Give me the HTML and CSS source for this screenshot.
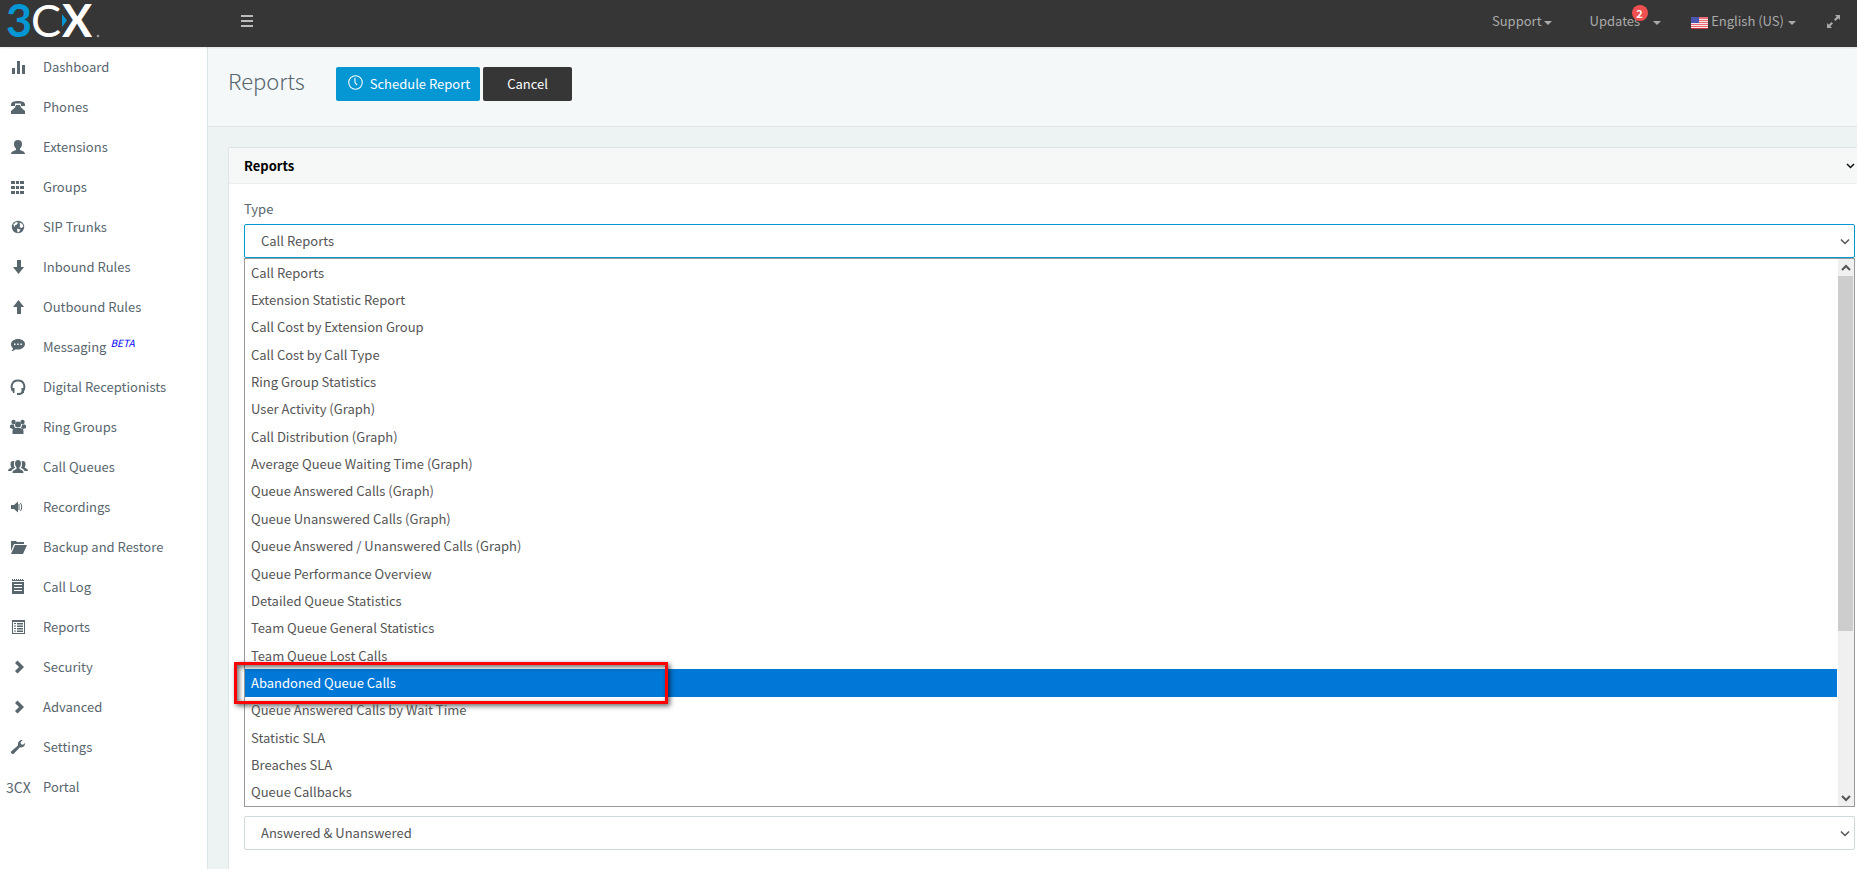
FILE: index.html
```html
<!DOCTYPE html>
<html lang="en">
<head>
<meta charset="utf-8">
<title>3CX Management Console - Reports</title>
<link rel="stylesheet" href="styles.css">
</head>
<body>
<header class="topbar">
  <a class="brand" href="#" aria-label="3CX">
    <svg class="logo" width="104" height="44" viewBox="0 0 104 44">
      <text class="logo-three" x="6" y="37">3</text>
      <text class="logo-letter" x="31" y="37">C</text>
      <text class="logo-letter logo-x" x="62" y="37">X</text>
      <path class="logo-tip" d="M62 14v13l5-6.500z"/>
      <circle class="logo-dot" cx="98" cy="36" r="1.300"/>
    </svg>
  </a>
  <button class="menu-toggle" aria-label="Toggle menu">
    <svg width="12" height="12" viewBox="0 0 12 12"><path fill="currentColor" d="M0 0h12v2H0zM0 5h12v2H0zM0 10h12v2H0z"/></svg>
  </button>
  <nav class="top-links">
    <button class="top-link">Support<span class="caret"></span></button>
    <button class="top-link updates">Updates<span class="badge">2</span><span class="caret"></span></button>
    <button class="top-link language">
      <svg class="flag" width="17" height="12" viewBox="0 0 17 12"><path fill="#f9e4e6" d="M0 0h17v12H0z"/><path fill="#ee6a74" d="M0 0h17v2H0zM0 3h17v1H0zM0 5h17v1H0zM0 7h17v1H0zM0 9h17v1H0z"/><path fill="#c8323c" d="M0 11h17v1H0z"/><path fill="#4c56b0" d="M0 0h8v6H0z"/></svg>
      English (US)<span class="caret"></span></button>
    <button class="top-link expand" aria-label="Full screen">
      <svg width="13" height="13" viewBox="0 0 13 13"><path fill="currentColor" d="M8 0h5v5l-1.700-1.700L8.500 6 7 4.500l2.700-2.800zM0 8l1.700 1.700L4.500 7 6 8.500l-2.700 2.800L5 13H0z"/></svg>
    </button>
  </nav>
</header>
<div class="layout">
  <nav class="sidebar">
    <a href="#"><svg class="icon" viewBox="0 0 16 16"><path d="M2 9h3v6H2zM7 2h3v13H7zM12 6h3v9h-3z"/></svg>Dashboard</a>
    <a href="#"><svg class="icon" viewBox="0 0 16 16"><path d="M1 5.500C1 3 4 2 8 2s7 1 7 3.500V7h-4V4.600H5V7H1zM6 6h4l1 2.500 4 3.500v3H1v-3l4-3.500z"/></svg>Phones</a>
    <a href="#"><svg class="icon" viewBox="0 0 16 16"><path d="M8 1c2.600 0 4 1.600 4 4 0 2-.8 3.600-2 4.600V11c1.500.8 5 1.400 5 4H1c0-2.600 3.500-3.200 5-4V9.600C4.800 8.600 4 7 4 5c0-2.400 1.400-4 4-4z"/></svg>Extensions</a>
    <a href="#"><svg class="icon" viewBox="0 0 16 16"><path d="M1 2h4v3H1zM6 2h3v3H6zM10 2h4v3h-4zM1 7h4v3H1zM6 7h3v3H6zM10 7h4v3h-4zM1 12h4v3H1zM6 12h3v3H6zM10 12h4v3h-4z"/></svg>Groups</a>
    <a href="#"><svg class="icon" viewBox="0 0 16 16"><circle cx="8" cy="8" r="6.200"/><path class="cut" d="M3.300 5.500 6 3l2 .5L7 5.500l-2 .8-.3 2.200zM9.500 3.500l3 1.500 1 2.500-2 1.500-2-1 .5-1.500zM7 9.500l3.500 1L9 13l-1.500.5z"/></svg>SIP Trunks</a>
    <a href="#"><svg class="icon" viewBox="0 0 16 16"><path d="M7 1h4v7h3l-5.500 7L3 8h4z"/></svg>Inbound Rules</a>
    <a href="#"><svg class="icon" viewBox="0 0 16 16"><path d="M7 15h4V8h3L8.500 1 3 8h4z"/></svg>Outbound Rules</a>
    <a href="#"><svg class="icon" viewBox="0 0 16 16"><path d="M8 0c4 0 7 2.200 7 5s-3 5.500-7 5.500c-.8 0-1.600 0-2.300-.3C4.500 11.300 3 12 1.500 12c1-.8 1.500-1.800 1.500-2.700C1.700 8.200 1 7 1 5.200 1 2.300 4 0 8 0z"/><path class="cut" d="M4 4.500h1.500v1.500H4zM7.200 4.500h1.500v1.500H7.200zM10.400 4.500h1.500v1.500h-1.500z"/></svg>Messaging <em class="beta">BETA</em></a>
    <a href="#"><svg class="icon" viewBox="0 0 16 16"><path class="line" d="M2.800 12C.5 8 1.500 1.500 8 1.500S15.500 8 13.200 12c-.6 2-1.700 3-4.200 3"/><path d="M2 9h2.500v5H3zM11.500 9H14v5h-2.500zM7 14h3v2H7z"/></svg>Digital Receptionists</a>
    <a href="#"><svg class="icon" viewBox="0 0 16 16"><circle cx="3.500" cy="3" r="2.200"/><circle cx="12.500" cy="3" r="2.200"/><circle cx="8" cy="5.500" r="3"/><path d="M0 9V7c0-1 1-1.500 2-1.500h2C4 7.500 4.600 8.500 5.500 9.200L3 10zM16 9V7c0-1-1-1.500-2-1.500h-2c0 2-.6 3-1.500 3.700L13 10zM2.500 15v-3c0-2 1-3 2.500-3h6c1.500 0 2.500 1 2.500 3v3z"/></svg>Ring Groups</a>
    <a href="#"><svg class="icon wide" viewBox="0 0 20 16"><path d="M10 1c2 0 3 1.300 3 3.200 0 1.800-.6 3-1.500 4V10c1.500.8 4 1.200 4 4h-11c0-2.800 2.500-3.200 4-4V8.200C7.600 7.200 7 6 7 4.200 7 2.300 8 1 10 1zM5 2c.6 0 1 .1 1.300.4C5.500 5 6 7.500 7 8.600 6.500 10 4 10 3.200 12H0c0-2 1.500-2.500 3.500-3.500C2.600 7 2.500 6 2.500 5 2.500 3 3.400 2 5 2zM15 2c-.6 0-1 .1-1.300.4C14.500 5 14 7.500 13 8.600c.5 1.400 3 1.400 3.800 3.400H20c0-2-1.500-2.500-3.500-3.500.9-1.500 1-2.500 1-3.500 0-2-.9-3-2.500-3z"/></svg>Call Queues</a>
    <a href="#"><svg class="icon" viewBox="0 0 16 16"><path d="M1 6h3l4-3.500v11L4 10H1z"/><path class="thin" d="M9 5v6M10.500 4c1.600 2 1.600 6 0 8"/></svg>Recordings</a>
    <a href="#"><svg class="icon wide" viewBox="0 0 20 16"><path d="M3 2h5l1 1h7v2H6L3 12zM7 6h12l-4 9H3z"/></svg>Backup and Restore</a>
    <a href="#"><svg class="icon" viewBox="0 0 16 16"><path d="M2 0h1v1h1V0h1v1h1V0h1v1h1V0h1v1h1V0h1v1h1V0h1v1h1v1H2zM2 3h12v12H2z"/><path class="cut" d="M4 5h8v1H4zM4 8h8v1H4zM4 11h8v1H4z"/></svg>Call Log</a>
    <a href="#"><svg class="icon" viewBox="0 0 16 16"><path d="M2 1h13v14H2z"/><path class="cut" d="M3 3h11v11H3z"/><path d="M4 4h2v1H4zM7 4h6v1.500H7zM4 6.500h2v1H4zM7 6.500h6V8H7zM4 9h2v1H4zM7 9h6v1.500H7zM4 11.500h2v1H4zM7 11.500h6V13H7z"/></svg>Reports</a>
    <a href="#"><svg class="icon" viewBox="0 0 16 16"><path d="M5 4l2.500-2.500L14 8l-6.500 6.500L5 12l4-4z"/></svg>Security</a>
    <a href="#"><svg class="icon" viewBox="0 0 16 16"><path d="M5 4l2.500-2.500L14 8l-6.500 6.500L5 12l4-4z"/></svg>Advanced</a>
    <a href="#"><svg class="icon" viewBox="0 0 16 16"><path d="M12.500 1 10.500 3.500l.5 1.800 2 .4L15 4c.3 3-2 5-5 4.300L3.500 15C2 15.500.5 14 1 12.600L8 6.500C7.500 3 9.500 1 12.500 1z"/></svg>Settings</a>
    <a href="#"><span class="mini-logo">3CX</span>Portal</a>
  </nav>
  <main class="content">
    <div class="page-head">
      <h1>Reports</h1>
      <div class="actions">
        <button class="btn primary"><svg class="clock" width="15" height="15" viewBox="0 0 14 14"><circle cx="7" cy="7" r="6.300"/><path d="M6.500 2.500V7l2 2.500"/></svg>Schedule Report</button>
        <button class="btn dark">Cancel</button>
      </div>
    </div>
    <section class="panel">
      <div class="panel-head">
        <h2>Reports</h2>
        <svg width="9" height="6" viewBox="0 0 9 6"><path d="M1 1l3.500 3.500L8 1" fill="none" stroke="#111" stroke-width="1.500"/></svg>
      </div>
      <div class="panel-body">
        <label for="type">Type</label>
        <div class="select-box">
          <select id="type" class="active"><option>Call Reports</option></select>
          <svg class="chevron" width="10" height="8" viewBox="0 0 10 8"><path d="M1 1.500l4 4 4-4"/></svg>
        </div>
        <div class="popup">
          <ul class="options" role="listbox" aria-label="Type">
            <li role="option">Call Reports</li>
            <li role="option">Extension Statistic Report</li>
            <li role="option">Call Cost by Extension Group</li>
            <li role="option">Call Cost by Call Type</li>
            <li role="option">Ring Group Statistics</li>
            <li role="option">User Activity (Graph)</li>
            <li role="option">Call Distribution (Graph)</li>
            <li role="option">Average Queue Waiting Time (Graph)</li>
            <li role="option">Queue Answered Calls (Graph)</li>
            <li role="option">Queue Unanswered Calls (Graph)</li>
            <li role="option">Queue Answered / Unanswered Calls (Graph)</li>
            <li role="option">Queue Performance Overview</li>
            <li role="option">Detailed Queue Statistics</li>
            <li role="option">Team Queue General Statistics</li>
            <li role="option">Team Queue Lost Calls</li>
            <li role="option" class="current" aria-selected="true">Abandoned Queue Calls<span class="marker"></span></li>
            <li role="option">Queue Answered Calls by Wait Time</li>
            <li role="option">Statistic SLA</li>
            <li role="option">Breaches SLA</li>
            <li role="option">Queue Callbacks</li>
          </ul>
          <div class="scrollbar">
            <svg width="10" height="8" viewBox="0 0 10 8"><path d="M1 6l4-4 4 4"/></svg>
            <div class="track"><div class="thumb"></div></div>
            <svg width="10" height="8" viewBox="0 0 10 8"><path d="M1 2l4 4 4-4"/></svg>
          </div>
        </div>
        <div class="select-box">
          <select aria-label="Answered"><option>Answered &amp; Unanswered</option></select>
          <svg class="chevron" width="10" height="8" viewBox="0 0 10 8"><path d="M1 1.500l4 4 4-4"/></svg>
        </div>
      </div>
    </section>
  </main>
</div>
</body>
</html>
```
FILE: styles.css
```css
* { box-sizing: border-box; }

body {
  margin: 0;
  min-height: 100vh;
  display: flex;
  flex-direction: column;
  overflow: hidden;
  background: #edf2f3;
  color: #58666e;
  font: 13px/20px "Source Sans Pro", "Noto Sans CJK SC", "Noto Sans", sans-serif;
}

button, select { font: inherit; }
h1, h2 { margin: 0; }

/* top bar */
.topbar {
  display: flex;
  align-items: center;
  height: 47px;
  padding-bottom: 5px;
  background: #363636;
  color: #aaa;
  box-shadow: 0 1px 2px rgba(0, 0, 0, .1);
  z-index: 1;
}
.brand { width: 237px; height: 42px; }
.logo { display: block; }
.logo-three { font: bold 45px Lato, sans-serif; fill: #0596d4; }
.logo-letter { font: 45px Lato, sans-serif; fill: #fff; }
.logo-x { font-weight: bold; }
.logo-tip { fill: #0596d4; }
.logo-dot { fill: #999; }
.menu-toggle, .top-link {
  padding: 0;
  border: 0;
  background: none;
  color: inherit;
  display: flex;
  align-items: center;
}
.menu-toggle { width: 20px; height: 20px; justify-content: center; color: #bbb; }
.top-links { display: flex; margin-left: auto; padding-right: 17px; }
.top-link { position: relative; height: 42px; margin-left: 38px; }
.caret {
  border: 4px solid transparent;
  border-top-color: currentColor;
  border-bottom: 0;
  margin: 3px 0 0 2px;
}
.updates .caret { margin-left: 13px; }
.language { margin-left: 30px; }
.language .caret { margin-left: 4px; }
.flag { margin: 3px 3px 0 0; }
.expand { margin-left: 31px; }
.badge {
  position: absolute;
  left: 42px;
  top: 5px;
  width: 16px;
  height: 16px;
  border-radius: 8px;
  background: #f05050;
  color: #fff;
  font-size: 11px;
  font-weight: bold;
  line-height: 16px;
  text-align: center;
}

/* side menu */
.layout { display: flex; flex: 1; }
.sidebar {
  flex: none;
  width: 208px;
  background: #fff;
  border-right: 1px solid #dbe4e6;
}
.sidebar a {
  display: flex;
  align-items: center;
  height: 40px;
  padding-left: 10px;
  color: inherit;
  text-decoration: none;
}
.icon { width: 16px; height: 16px; margin-right: 17px; fill: #58666e; }
.icon.wide { width: 20px; margin: 0 15px 0 -2px; }
.icon .cut { fill: #fff; }
.icon .line, .icon .thin { fill: none; stroke: #58666e; stroke-width: 2; }
.icon .thin { stroke-width: 1; }
.beta { margin: -8px 0 0 4px; color: #00f; font-size: 10px; }
.mini-logo { width: 37px; margin-left: -4px; font-size: 14px; }

/* page heading */
.content { flex: 1; min-width: 0; display: flex; flex-direction: column; }
.page-head {
  display: flex;
  align-items: flex-start;
  gap: 31px;
  height: 80px;
  padding: 20px;
  background: #f4f8f9;
  border-bottom: 1px solid #dee5e7;
}
h1 { font-size: 22px; font-weight: 300; line-height: 26px; }
.actions { display: flex; gap: 3px; }
.btn {
  display: flex;
  align-items: center;
  height: 34px;
  padding: 0 10px 0 12px;
  gap: 7px;
  border: 0;
  border-radius: 2px;
  color: #fff;
}
.primary { background: #0596d4; }
.dark { padding: 0 24px; background: #363636; }
.clock { margin-bottom: 3px; fill: none; stroke: currentColor; }

/* report panel */
.panel {
  flex: 1;
  margin: 20px 0 0 20px;
  border: 1px solid #dee5e7;
  border-right: 0;
  border-bottom: 0;
  border-radius: 2px 0 0 0;
  background: #fff;
}
.panel-head {
  display: flex;
  align-items: center;
  justify-content: space-between;
  height: 36px;
  padding: 0 2px 0 15px;
  background: #f6f8f8;
  border-bottom: 1px solid #e9eeef;
}
h2 { font-size: 13px; color: #000; }
.panel-body { padding: 15px 2px 20px 15px; }
label { display: block; margin-bottom: 5px; }
.select-box { position: relative; }
select {
  appearance: none;
  display: block;
  width: 100%;
  height: 34px;
  padding: 0 16px;
  border: 1px solid #cfdadd;
  border-radius: 2px;
  background: #fff;
  color: #555;
}
select.active { border-color: #0596d4; }
.chevron { position: absolute; right: 5px; top: 14px; }
.chevron path, .scrollbar path { fill: none; stroke: #555; stroke-width: 2; }
.chevron path { stroke-width: 1.500; }

/* open option list */
.popup {
  display: flex;
  height: 549px;
  margin-bottom: 9px;
  border: 1px solid #999;
}
.options {
  flex: 1;
  display: grid;
  grid-template-rows: repeat(20, 1fr);
  margin: 0 1px 0 0;
  padding: 0;
  list-style: none;
  color: #555;
}
.options li { position: relative; display: flex; align-items: center; padding-left: 6px; min-height: 0; }
.options .current { background: #0078d7; color: #fff; }
.marker {
  position: absolute;
  left: -11px;
  top: -7px;
  width: 434px;
  height: 42px;
  border: 3px solid #f00;
  box-shadow: 2px 2px 5px rgba(0, 0, 0, .6), inset 2px 2px 5px rgba(0, 0, 0, .6);
}
.scrollbar {
  display: flex;
  flex-direction: column;
  align-items: center;
  width: 16px;
  padding: 5px 0 4px;
  background: #f0f0f0;
}
.track { flex: 1; width: 100%; padding: 4px 1px 4px 0; }
.thumb { height: 69%; background: #cdcdcd; }
```
